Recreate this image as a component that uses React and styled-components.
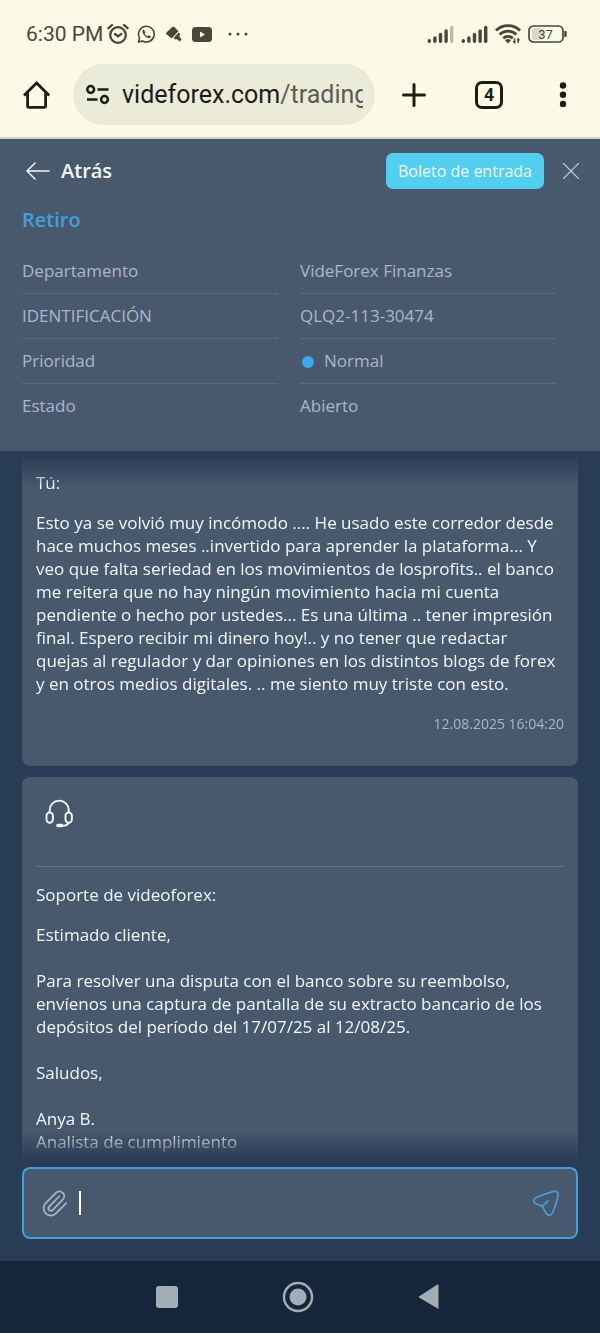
import styled, { createGlobalStyle } from 'styled-components'
import { Paperclip } from 'lucide-react'

const GlobalStyle = createGlobalStyle`
  :root{
    --cream: #fcfbe8;
    --pill: #ebebda;
    --ink: #1d1d12;
    --ink-soft: #46463a;
    --navy: #293c55;
    --navy-dark: #16263a;
    --slate: #49596d;
    --line: #5b6a77;
    --muted: #a9b7c8;
    --text: #f1f6fb;
    --accent: #3fa0dc;
    --cyan: #51cfee;
  }

  *{
    box-sizing: border-box;
  }

  body{
    margin: 0;
    background-color: var(--navy);
    font-family: "Open Sans", sans-serif;
  }

  button{
    padding: 0;
    border: 0;
    background: none;
    color: inherit;
    font: inherit;
    cursor: pointer;
  }

  svg{
    display: block;
    flex: none;
  }
`

const Screen = styled.div`
  display: flex;
  flex-direction: column;
  block-size: 100vh;
`

const StatusBar = styled.div`
  display: flex;
  align-items: center;
  justify-content: space-between;
  padding: 20px 33px 16px 26px;
  background-color: var(--cream);
  color: var(--ink-soft);
  font: 21px/28px Roboto, sans-serif;
`

const StatusGroup = styled.div`
  display: flex;
  align-items: center;
  gap: ${({ $gap }) => $gap}px;
`

const Clock = styled.span`
  margin-inline-end: -4px;
`

const BrowserBar = styled.div`
  display: flex;
  align-items: center;
  padding: 0 23px 12px;
  background-color: var(--cream);
  border-block-end: 2px solid #cdd5d6;
  color: var(--ink);
`

const AddressBar = styled.div`
  display: flex;
  flex: 1;
  align-items: center;
  gap: 12px;
  min-inline-size: 0;
  block-size: 61px;
  margin-inline: 22px 26px;
  padding-inline: 12px;
  border-radius: 31px;
  background-color: var(--pill);
`

const Address = styled.span`
  flex: 1;
  overflow: hidden;
  white-space: nowrap;
  font: 25px/32px Roboto, sans-serif;

  span{
    color: #5c5c4f;
  }
`

const BrowserTools = styled.div`
  display: flex;
  gap: 46px;
`

const TabCount = styled.button`
  inline-size: 28px;
  block-size: 28px;
  border: 3px solid var(--ink);
  border-radius: 7px;
  font: 700 17px/22px "Open Sans", sans-serif;
`

const TicketHeader = styled.header`
  padding: 14px 21px 22px 22px;
  background-color: var(--slate);
  color: var(--muted);
`

const TopRow = styled.div`
  display: flex;
  align-items: center;
  gap: 19px;
`

const BackButton = styled.button`
  display: flex;
  align-items: center;
  gap: 11px;
  margin-inline: 4px auto;
  color: var(--text);
  font: 600 20px/28px "Open Sans", sans-serif;
`

const TicketButton = styled.button`
  block-size: 36px;
  padding-inline: 12px;
  border-radius: 7px;
  background-color: var(--cyan);
  color: var(--text);
  font-size: 16px;
`

const Title = styled.h1`
  margin: 17px 0 15px;
  color: var(--accent);
  font: 600 20px/28px "Open Sans", sans-serif;
`

const Details = styled.dl`
  margin: 0;
  padding-inline-end: 23px;
`

const DetailRow = styled.div`
  display: grid;
  grid-template-columns: 1fr 1fr;
  gap: 22px;
  font-size: 17px;
  line-height: 44px;

  dt, dd{
    margin: 0;
    border-block-end: 1px solid var(--line);
  }

  &:last-child dt, &:last-child dd{
    border-color: transparent;
  }
`

const Dot = styled.span`
  display: inline-block;
  inline-size: 12px;
  block-size: 12px;
  margin-inline: 2px 10px;
  border-radius: 50%;
  background-color: #36a9ef;
  vertical-align: -1px;
`

const Thread = styled.main`
  flex: 1;
  min-block-size: 0;
  margin: 8px 22px 7px;
  overflow-y: auto;
  scrollbar-width: none;
  mask-image: linear-gradient(rgb(0 0 0 / 0.12), #000 28px, #000 calc(100% - 30px), rgb(0 0 0 / 0.05));
`

const Message = styled.article`
  padding: 12px 14px 31px;
  border-radius: ${({ $continued }) => ($continued ? '0 0 8px 8px' : '8px')};
  background-color: var(--slate);
  color: var(--text);
  font-size: 17px;
  line-height: 23px;

  & + &{
    margin-block-start: 11px;
  }

  p{
    margin: 0 0 23px;
  }

  .author{
    margin-block-end: 17px;
  }

  time{
    display: block;
    margin-block-start: -6px;
    color: var(--muted);
    font-size: 14px;
    text-align: end;
  }
`

const AgentBar = styled.div`
  block-size: 78px;
  margin-block-end: 16px;
  padding: 10px 9px;
  border-block-end: 1px solid #637384;
`

const Composer = styled.form`
  display: flex;
  align-items: center;
  block-size: 72px;
  margin: 0 22px 22px;
  padding-inline: 16px;
  border: 2px solid var(--accent);
  border-radius: 8px;
  background-color: var(--slate);
  color: var(--muted);

  input{
    flex: 1;
    min-inline-size: 0;
    border: 0;
    outline: 0;
    background: none;
    color: var(--text);
    font: 17px/23px "Open Sans", sans-serif;
  }
`

const Caret = styled.span`
  inline-size: 2px;
  block-size: 24px;
  margin-inline-start: 10px;
  background-color: #fff;
`

const SendButton = styled.button`
  color: var(--accent);
`

const SystemNav = styled.nav`
  display: flex;
  align-items: center;
  justify-content: center;
  gap: 104px;
  block-size: 72px;
  padding-inline-end: 4px;
  background-color: var(--navy-dark);
  color: #a3adb5;
`

const AlarmIcon = () => (
  <svg width="22" height="22" viewBox="0 0 22 22" fill="none" stroke="currentColor" strokeWidth="2.3" strokeLinecap="round">
    <circle cx="11" cy="12" r="7.8" />
    <path d="M1.5 5.2 5 2M20.500 5.200 17 2M8 11l3 2.400 3.200-2.400" />
  </svg>
)

const WhatsappIcon = () => (
  <svg width="19" height="20" viewBox="0 0 21 21" fill="none" stroke="currentColor" strokeWidth="1.7">
    <path d="M1.6 19.4 2.8 15A8.7 8.7 0 1 1 6 18.2Z" strokeLinejoin="round" />
    <path d="M7.4 5.6c-1 .4-1.600 1.400-1.300 2.800.8 3.400 3.300 5.800 6.500 6.600 1.400.3 2.600-.4 2.800-1.700l-2.500-1.500-1.300 1.200c-1.500-.6-2.500-1.600-3.200-3.100l1-1.300Z" fill="currentColor" stroke="none" />
  </svg>
)

const CleanerIcon = () => (
  <svg width="20" height="18" viewBox="-1 0 20 18" fill="currentColor">
    <path d="M1.4 7.5 7.3 2q1-.8 2 0l4.200 4.300-6.800 7.200-5.300-4.300q-.8-.8 0-1.700Z" />
    <path d="m8.600 13 5.200-5.400 1.600 1.700-1.200 1.900 2.400 3.300-1.900 2-3-2.600-1.800.6Z" />
  </svg>
)

const YoutubeIcon = () => (
  <svg width="20" height="15" viewBox="0 0 20 15">
    <rect width="20" height="15" rx="3.5" fill="currentColor" />
    <path d="m8 4.600 5 2.900-5 2.900Z" fill="#fcfbe8" />
  </svg>
)

const MoreIcon = () => (
  <svg width="20" height="4" viewBox="0 0 20 4" fill="currentColor">
    <circle cx="2" cy="2" r="1.5" />
    <circle cx="10" cy="2" r="1.5" />
    <circle cx="18" cy="2" r="1.5" />
  </svg>
)

const SignalIcon = ({ weak }) => (
  <svg width="27" height="18" viewBox="0 0 27 18" stroke="currentColor" strokeWidth="3.4" strokeLinecap="round">
    <path d="M2.300 15.800v.4M7.900 13v3.200M13.500 9.500v6.700M19.100 6v10.200" />
    <path d="M24.700 2.500v13.700" opacity={weak ? 0.35 : 1} />
  </svg>
)

const WifiIcon = () => (
  <svg width="26" height="20" viewBox="0 0 26 20" fill="none" stroke="currentColor" strokeWidth="2.8">
    <path d="M1 6.600a17 17 0 0 1 24 0M4.600 10.600a12 12 0 0 1 16.800 0M8.200 14.300a7 7 0 0 1 9.600 0" />
    <path d="m10 16.300q3-2.400 6 0L13 19.500Z" fill="currentColor" stroke="none" />
    <path d="M19.600 14.500v5M23.200 14v5" strokeWidth="1.5" />
    <path d="m17.500 17 2.100 2.800 1-2.800ZM22.200 16.500l1-2.500 2.300 2.500Z" fill="currentColor" stroke="none" />
  </svg>
)

const BatteryIcon = () => (
  <svg width="39" height="18" viewBox="0 0 39 18">
    <rect x="4" y="3" width="11" height="12" rx="2" fill="#d9d9cb" />
    <rect x="1" y="1" width="34" height="16" rx="4.5" fill="none" stroke="currentColor" strokeWidth="1.7" />
    <path d="M36.300 6h1.200q1.200 0 1.200 1.200v3.600q0 1.200-1.200 1.200h-1.200Z" fill="currentColor" />
    <text x="17.5" y="13.5" textAnchor="middle" fontFamily="Roboto, sans-serif" fontSize="13" fill="currentColor">37</text>
  </svg>
)

const HomeIcon = () => (
  <svg width="28" height="28" viewBox="0 0 28 28" fill="none" stroke="currentColor" strokeWidth="2.8">
    <path d="M1 14.500 13.600 2 26.200 14.500" />
    <path d="M4.600 12v13.100q0 1.300 1.300 1.300h15.400q1.300 0 1.300-1.300V12" />
  </svg>
)

const SiteIcon = () => (
  <svg width="25" height="21" viewBox="0 0 25 21" fill="none" stroke="currentColor" strokeWidth="2.5">
    <circle cx="5.7" cy="5.5" r="3.4" />
    <path d="M12.500 5.500H23.500M2 15.500h10.500" />
    <circle cx="19.5" cy="15.5" r="3.4" />
  </svg>
)

const PlusIcon = () => (
  <svg width="28" height="28" viewBox="0 0 28 28" stroke="currentColor" strokeWidth="3" strokeLinecap="round">
    <path d="M13 3.500v21M2.500 14h21" />
  </svg>
)

const DotsIcon = () => (
  <svg width="28" height="28" viewBox="0 0 28 28" fill="currentColor">
    <circle cx="14" cy="4.5" r="3.2" />
    <circle cx="14" cy="13.7" r="3.2" />
    <circle cx="14" cy="22.9" r="3.2" />
  </svg>
)

const ArrowIcon = () => (
  <svg width="24" height="18" viewBox="0 0 24 18" fill="none" stroke="currentColor" strokeWidth="1.5" strokeLinecap="round" strokeLinejoin="round">
    <path d="M23 9H1M9 1 1 9l8 8" />
  </svg>
)

const CloseIcon = () => (
  <svg width="16" height="16" viewBox="0 0 16 16" stroke="#c9d1da" strokeWidth="1.2">
    <path d="m0 0 16 16M16 0 0 16" />
  </svg>
)

const HeadsetIcon = () => (
  <svg width="29" height="29" viewBox="0 0 29 29" fill="none" stroke="currentColor" strokeWidth="1.9">
    <rect x="1.5" y="13.5" width="6.4" height="10.3" rx="3.2" />
    <rect x="20.5" y="13.5" width="6.4" height="10.3" rx="3.2" />
    <path d="M4.700 13.500v-2.400a9.500 9.500 0 0 1 19 0v2.400M23.700 23.800q-1.500 3-6.200 3" />
    <path d="M13 26.500h3.500" strokeWidth="3.6" strokeLinecap="round" />
  </svg>
)

const SendIcon = () => (
  <svg width="28" height="28" viewBox="0 0 28 28" fill="none" stroke="currentColor" strokeWidth="1.7" strokeLinecap="round" strokeLinejoin="round">
    <path d="M10.300 17.300 4 14.800C.9 13.400.9 10 4.200 8.600Q12 5 21.800 2.400c2.800-.7 4.900 1.300 4.200 4Q24.500 15.500 20.500 24c-1.300 3-4.600 3.200-6.100.5Q12.400 21 10.300 17.300ZM10.300 17.300l5.600-5.500" />
  </svg>
)

const details = [
  ['Departamento', 'VideForex Finanzas'],
  ['IDENTIFICACIÓN', 'QLQ2-113-30474'],
  ['Prioridad', 'Normal'],
  ['Estado', 'Abierto'],
]

function PhoneStatus(){
  return(
    <StatusBar>
      <StatusGroup $gap={8}>
        <Clock>6:30 PM</Clock>
        <AlarmIcon />
        <WhatsappIcon />
        <CleanerIcon />
        <YoutubeIcon />
        <span />
        <MoreIcon />
      </StatusGroup>
      <StatusGroup $gap={7}>
        <SignalIcon weak />
        <SignalIcon />
        <WifiIcon />
        <BatteryIcon />
      </StatusGroup>
    </StatusBar>
  )
}

function Browser(){
  return(
    <BrowserBar>
      <button type="button" aria-label="Inicio"><HomeIcon /></button>
      <AddressBar>
        <SiteIcon />
        <Address>videforex.com<span>/trading</span></Address>
      </AddressBar>
      <BrowserTools>
        <button type="button" aria-label="Nueva pestaña"><PlusIcon /></button>
        <TabCount type="button">4</TabCount>
        <button type="button" aria-label="Menú"><DotsIcon /></button>
      </BrowserTools>
    </BrowserBar>
  )
}

function Ticket(){
  return(
    <TicketHeader>
      <TopRow>
        <BackButton type="button"><ArrowIcon />Atrás</BackButton>
        <TicketButton type="button">Boleto de entrada</TicketButton>
        <button type="button" aria-label="Cerrar"><CloseIcon /></button>
      </TopRow>
      <Title>Retiro</Title>
      <Details>
        {details.map(([label, value]) => (
          <DetailRow key={label}>
            <dt>{label}</dt>
            <dd>{label === 'Prioridad' && <Dot />}{value}</dd>
          </DetailRow>
        ))}
      </Details>
    </TicketHeader>
  )
}

function App(){
  return(
    <Screen>
      <GlobalStyle />
      <PhoneStatus />
      <Browser />
      <Ticket />
      <Thread>
        <Message $continued>
          <p className="author">Tú:</p>
          <p>
            Esto ya se volvió muy incómodo .... He usado este corredor desde hace muchos meses ..invertido
            para aprender la plataforma... Y veo que falta seriedad en los movimientos de losprofits.. el
            banco me reitera que no hay ningún movimiento hacia mi cuenta pendiente o hecho por ustedes...
            Es una última .. tener impresión final. Espero recibir mi dinero hoy!.. y no tener que redactar
            quejas al regulador y dar opiniones en los distintos blogs de forex y en otros medios
            digitales. .. me siento muy triste con esto.
          </p>
          <time>12.08.2025 16:04:20</time>
        </Message>
        <Message>
          <AgentBar><HeadsetIcon /></AgentBar>
          <p className="author">Soporte de videoforex:</p>
          <p>Estimado cliente,</p>
          <p>
            Para resolver una disputa con el banco sobre su reembolso, envíenos una captura de pantalla de
            su extracto bancario de los depósitos del período del 17/07/25 al 12/08/25.
          </p>
          <p>Saludos,</p>
          <p>Anya B.<br />Analista de cumplimiento</p>
        </Message>
      </Thread>
      <Composer>
        <button type="button" aria-label="Adjuntar archivo"><Paperclip size={29} strokeWidth={1.4} /></button>
        <Caret />
        <input type="text" aria-label="Mensaje" />
        <SendButton type="submit" aria-label="Enviar"><SendIcon /></SendButton>
      </Composer>
      <SystemNav>
        <button type="button" aria-label="Recientes">
          <svg width="22" height="22" viewBox="0 0 22 22"><rect width="22" height="22" rx="3" fill="currentColor" /></svg>
        </button>
        <button type="button" aria-label="Pantalla de inicio">
          <svg width="32" height="32" viewBox="0 0 32 32">
            <circle cx="16" cy="16" r="14" fill="none" stroke="currentColor" strokeWidth="2.4" />
            <circle cx="16" cy="16" r="8.5" fill="currentColor" />
          </svg>
        </button>
        <button type="button" aria-label="Volver">
          <svg width="22" height="26" viewBox="0 0 22 26"><path d="M20.500 1v24L1 13.500q-.6-.5 0-1L19 .8q1.500-.8 1.500.5Z" fill="currentColor" /></svg>
        </button>
      </SystemNav>
    </Screen>
  )
}

export default App
